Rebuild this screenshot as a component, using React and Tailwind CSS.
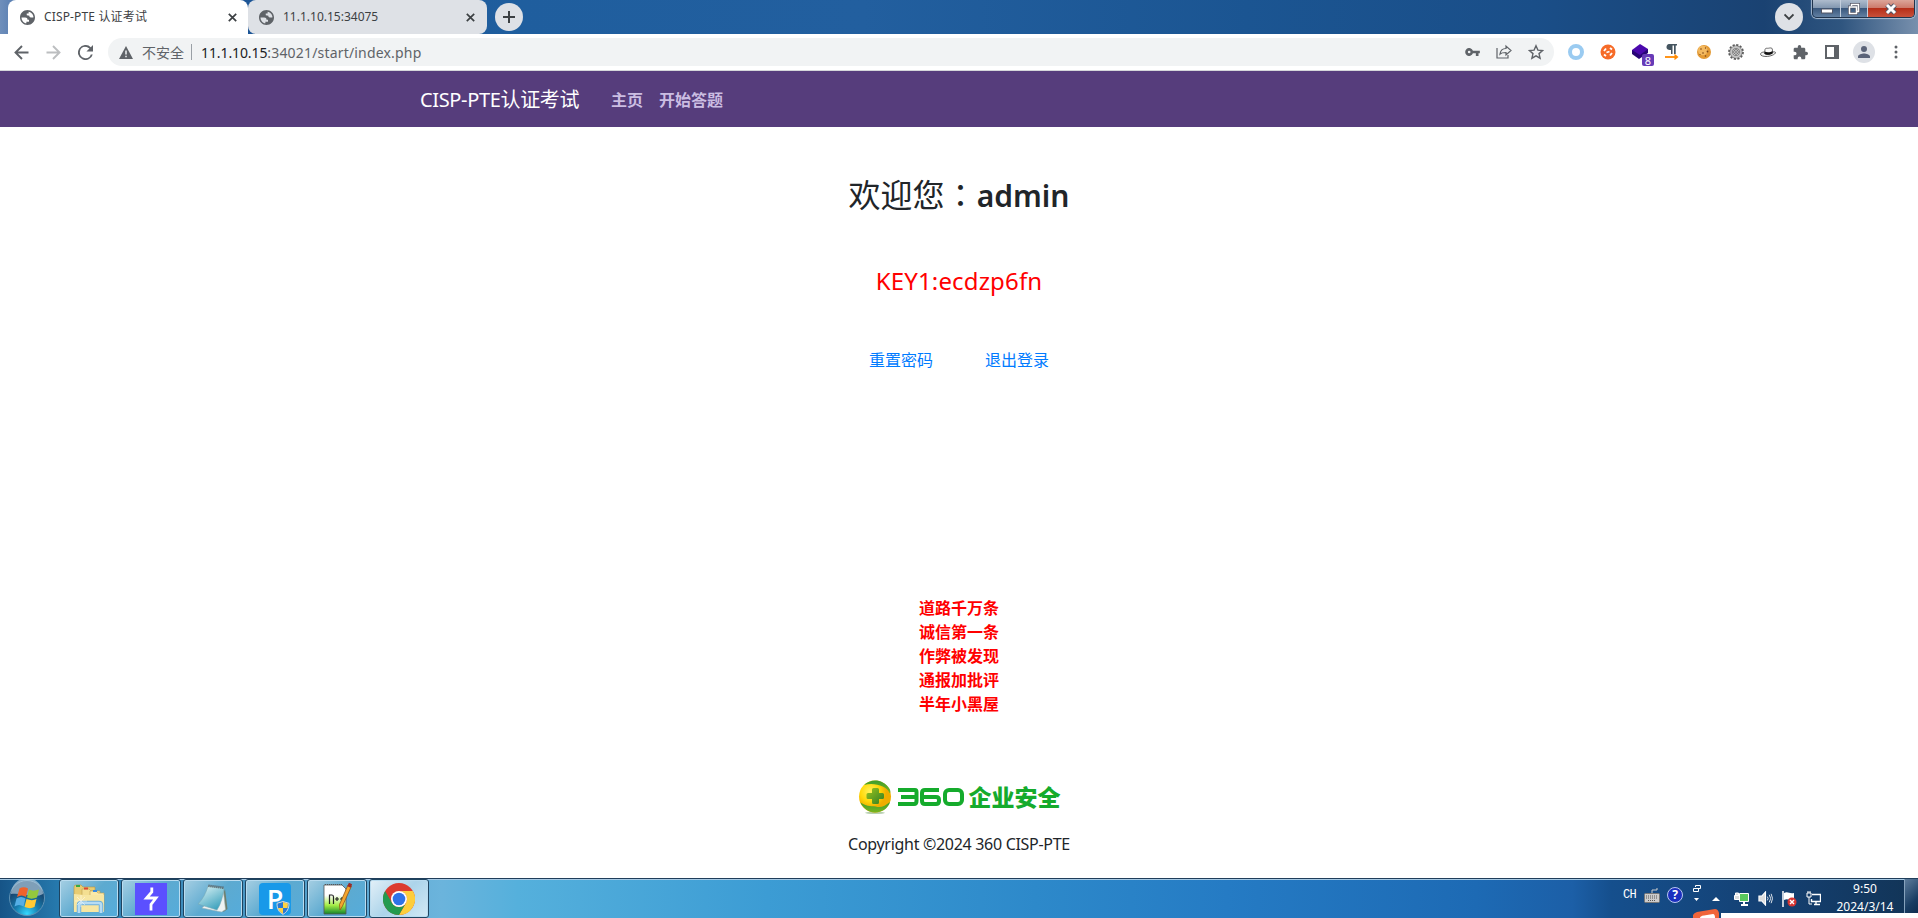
import React from "react";

const ui = "font-['Noto_Sans','Noto_Sans_CJK_SC',sans-serif]";

function Globe() {
  return (
    <svg className="size-[15px] shrink-0" viewBox="2 2 20 20" fill="#5f6368">
      <path d="M12 2C6.480 2 2 6.480 2 12s4.480 10 10 10 10-4.480 10-10S17.520 2 12 2zM4 12h5c2 0 3 1.200 3 3h2v2.500h-3.500v2.300C7 19.500 4 16 4 12zm9.500-7.800c3 .6 5.500 2.800 6.300 6V12h-3.300c-1.500 0-2-1-2-2.200L11 9V6.500h2.500z" fillRule="evenodd" />
    </svg>
  );
}

function Cross() {
  return (
    <svg className="size-[9px] shrink-0" viewBox="0 0 9 9" stroke="#3c4043" strokeWidth="1.700">
      <path d="M.8.8l7.400 7.400M8.200.8L.8 8.200" />
    </svg>
  );
}

function TabStrip() {
  return (
    <div className="flex h-[34px] shrink-0 bg-[linear-gradient(90deg,#6f8fbb_0,#5078ae_1%,#1c5495_12%,#1f5e9e_27%,#225f9f_45%,#1b5592_65%,#1a4e88_80%,#1a4272_92%,#2f557f_96%,#7890ad_100%)]">
      <div className="ml-2 flex h-full w-[240px] items-center rounded-t-lg bg-white pl-[12px] pr-[11px]">
        <Globe />
        <span className="ml-[9px] flex-1 whitespace-nowrap text-[12px] tracking-[0.150px] text-[#3c4043]">CISP-PTE 认证考试</span>
        <Cross />
      </div>
      <div className="flex h-full w-[239px] items-center rounded-lg bg-[#dee1e6] pl-[11px] pr-3">
        <Globe />
        <span className="ml-[9px] flex-1 text-[12px] text-[#3c4043]">11.1.10.15:34075</span>
        <Cross />
      </div>
      <div className="ml-2 mt-[3px] flex size-7 items-center justify-center rounded-full bg-[#dee1e6]">
        <svg className="size-3" viewBox="0 0 12 12" stroke="#3c4043" strokeWidth="2"><path d="M6 0v12M0 6h12" /></svg>
      </div>
      <div className="flex-1" />
      <div className="mt-[3px] flex size-7 items-center justify-center rounded-full bg-[#dee1e6]">
        <svg className="size-[10px]" viewBox="0 0 10 10" fill="none" stroke="#3c4043" strokeWidth="1.800"><path d="M.5 2.500L5 7l4.500-4.500" /></svg>
      </div>
      <div className="ml-[9px] mr-[3px] flex h-[18px] w-[103px] overflow-hidden rounded-b-[5px] border border-t-0 border-[#20344d] shadow-[0_0_1px_1px_#a9bdd3]">
        <div className="flex w-[28px] items-center justify-center border-r border-[#c4d0de] bg-[linear-gradient(#aebccd_0,#8398b1_45%,#3a587d_50%,#6280a2_100%)]">
          <svg className="size-[12px]" viewBox="0 0 12 12"><rect x=".5" y="6" width="11" height="4" fill="#fff" stroke="#535666" /></svg>
        </div>
        <div className="flex w-[27px] items-center justify-center border-r border-[#c4d0de] bg-[linear-gradient(#aebccd_0,#8398b1_45%,#3a587d_50%,#6280a2_100%)]">
          <svg className="size-[12px]" viewBox="0 0 12 12" fill="none"><path d="M3.500 3V1.500h7v7H9M1.500 4h7v6.500h-7z" stroke="#535666" strokeWidth="3" /><path d="M3.500 3V1.500h7v7H9M1.500 4h7v6.500h-7z" stroke="#fff" strokeWidth="1.500" /></svg>
        </div>
        <div className="flex flex-1 items-center justify-center bg-[linear-gradient(#dca599_0,#cd7b6c_45%,#b62f19_50%,#c8503a_100%)]">
          <svg className="h-[12px] w-[14px]" viewBox="-1 0 14 12"><path d="M2 2l8 8M10 2l-8 8" stroke="#535666" strokeWidth="5" /><path d="M2 2l8 8M10 2l-8 8" stroke="#fff" strokeWidth="3" /></svg>
        </div>
      </div>
    </div>
  );
}

function Slot({ children }) {
  return <div className="flex w-8 shrink-0 items-center justify-center">{children}</div>;
}

function Extensions() {
  return (
    <>
      <Slot><svg className="size-4" viewBox="0 0 16 16"><circle cx="8" cy="8" r="6" fill="none" stroke="#9acbf1" strokeWidth="4" /></svg></Slot>
      <Slot>
        <svg className="size-4" viewBox="0 0 16 16">
          <circle cx="8" cy="8" r="7.500" fill="#f66b28" />
          <path d="M4 7l2-2.500M10 4l2 1.500M12 9l-2 2.500M6 12l-2-1.500" stroke="#fff" strokeWidth="1.900" /><path d="M6.500 8.500l3-1" stroke="#fff" strokeWidth="1.800" />
        </svg>
      </Slot>
      <Slot>
        <div className="relative h-4 w-4">
          <svg className="size-4" viewBox="0 0 16 16"><path d="M0 6v4l7 5 9-6V5z" fill="#280576" /><path d="M0 6l8-6 8 5-8 6z" fill="#4b08ad" /></svg>
          <span className={"absolute left-[10px] top-[10px] flex h-3 w-3 items-center justify-center rounded-[2px] bg-[#673ab7] text-[11px] leading-none text-white " + ui}>8</span>
        </div>
      </Slot>
      <Slot>
        <svg className="size-4" viewBox="0 0 16 16"><path d="M5 0h8v1.500h-1.300V10H10V1.500H8.500V10H7V6C3 6 2.500 4.500 2.500 3S3.500 0 5 0z" fill="#455560" /><path d="M1 13h11" stroke="#ff8a00" strokeWidth="1.800" /><path d="M10.500 9.800L14.500 13l-4 3.200z" fill="#ff8a00" /></svg>
      </Slot>
      <Slot>
        <svg className="size-4" viewBox="0 0 16 16"><circle cx="8" cy="8" r="7" fill="#e39a35" /><circle cx="6.800" cy="6.500" r="4.800" fill="#f3b960" /><g fill="#7b4314"><circle cx="5" cy="5" r=".8" /><circle cx="9.500" cy="4" r=".7" /><circle cx="11.500" cy="7.500" r=".9" /><circle cx="7" cy="9" r=".8" /><circle cx="4" cy="10.500" r=".6" /><circle cx="9.500" cy="12" r=".8" /></g></svg>
      </Slot>
      <Slot>
        <svg className="size-4" viewBox="0 0 16 16" fill="none"><circle cx="8" cy="8" r="7" stroke="#5c5c5c" strokeWidth="1.800" strokeDasharray="2.200 1.465" /><circle cx="8" cy="8" r="4.800" stroke="#6a6a6a" strokeWidth="3.400" /><circle cx="8" cy="8" r="4.800" stroke="#c4c4c4" strokeWidth="2.200" /><circle cx="8" cy="8" r="2.300" fill="#eee" stroke="#555" strokeWidth="1" /><circle cx="8" cy="8" r="1" fill="#777" /></svg>
      </Slot>
      <Slot>
        <svg className="size-4" viewBox="0 0 16 16"><path d="M4.500 8C2 8 .5 9 .5 10.200c0 1.500 3 2.300 5.500 2.300 4 0 9.500-2 9.500-4 0-.7-1.500-.8-3-.5" fill="#f3f3f3" stroke="#444" strokeWidth=".8" /><path d="M4.500 9.500L5 5.500c.5-1.800 2-1 3.500-1.300S12 3.500 12.300 5l.4 4c-2 1.800-6.500 2-8.200.5z" fill="#fafafa" stroke="#333" strokeWidth=".7" /><path d="M4.700 7.500c2 1.300 6 1 7.800-.5l.2 2.200c-2 1.800-6.500 2-8.200.5z" fill="#111" /></svg>
      </Slot>
      <Slot><svg className="size-[15px]" viewBox="1 1 22 22" fill="#5f6368"><path d="M20.500 11H19V7c0-1.100-.9-2-2-2h-4V3.500a2.500 2.500 0 0 0-5 0V5H4c-1.100 0-2 .9-2 2v3.800h1.500a2.700 2.700 0 0 1 0 5.400H2V20c0 1.100.9 2 2 2h3.800v-1.500a2.700 2.700 0 0 1 5.400 0V22H17c1.100 0 2-.9 2-2v-4h1.500a2.500 2.500 0 0 0 0-5z" /></svg></Slot>
      <Slot><svg className="size-[14px]" viewBox="0 0 14 14"><path d="M1 1h12v12H1z" fill="none" stroke="#5f6368" strokeWidth="2" /><path d="M9 1h4v12H9z" fill="#5f6368" /></svg></Slot>
      <Slot>
        <div className="flex size-[22px] items-center justify-center rounded-full bg-[#dee1e6]"><svg className="size-[12px]" viewBox="4 4 16 16" fill="#5a6378"><path d="M12 12a4 4 0 1 0 0-8 4 4 0 0 0 0 8zm0 2c-2.700 0-8 1.300-8 4v2h16v-2c0-2.700-5.300-4-8-4z" /></svg></div>
      </Slot>
      <Slot><svg className="h-[14px] w-1" viewBox="0 0 4 14" fill="#5f6368"><circle cx="2" cy="2" r="1.500" /><circle cx="2" cy="7" r="1.500" /><circle cx="2" cy="12" r="1.500" /></svg></Slot>
    </>
  );
}

function Toolbar() {
  return (
    <div className="flex h-[36px] shrink-0 items-center bg-white pl-[14px] pr-[6px] text-[#5f6368]">
      <svg className="size-[15px]" viewBox="0 0 15 15" fill="none" stroke="#5f6368" strokeWidth="1.900"><path d="M14.500 7.500H1.500M8 1L1.500 7.500 8 14" /></svg>
      <svg className="ml-[17px] size-[15px]" viewBox="0 0 15 15" fill="none" stroke="#bcbec0" strokeWidth="1.900"><path d="M.5 7.500h13M7 1l6.500 6.500L7 14" /></svg>
      <svg className="ml-[17px] size-[15px]" viewBox="4 4 16 16" fill="#5f6368"><path d="M17.650 6.350A8 8 0 1 0 19.730 14h-2.080A6 6 0 1 1 12 6c1.660 0 3.140.69 4.220 1.780L13 11h7V4z" /></svg>
      <div className="ml-[15px] flex h-[28px] flex-1 items-center rounded-full bg-[#f1f3f4] pl-[11px] pr-[2px]">
        <svg className="h-[13px] w-[14px]" viewBox="0 0 14 13"><path d="M7 0l7 13H0z" fill="#5f6368" /><path d="M7 4.500v4M7 9.700v1.500" stroke="#f1f3f4" strokeWidth="1.500" /></svg>
        <span className="ml-[9px] text-[14px]">不安全</span>
        <span className="ml-[7px] h-4 w-px bg-[#9aa0a6]" />
        <span className="ml-[9px] flex-1 text-[14px] tracking-[0.180px] text-[#5f6368]"><span className="tracking-[-0.100px] text-[#202124]">11.1.10.15</span>:34021/start/index.php</span>
        <Slot><svg className="h-[8px] w-[15px]" viewBox="1 6 22 12" fill="#5f6368"><path d="M12.650 10A6 6 0 1 0 12.650 14H17v4h4v-4h2v-4zM7 14a2 2 0 1 1 0-4 2 2 0 0 1 0 4z" /></svg></Slot>
        <Slot><svg className="size-4" viewBox="0 0 16 16" fill="none" stroke="#5f6368" strokeWidth="1.200"><path d="M1 4v10h11v-3" /><path d="M4 10c.5-4 3-5.500 6-5.500V2l5 4.500-5 4.500V8.500c-2.500 0-4.500 0-6 1.500z" /></svg></Slot>
        <Slot><svg className="size-4" viewBox="0 0 16 16" fill="none" stroke="#5f6368" strokeWidth="1.400"><path d="M8 1.800l1.900 4.300 4.700.4L11 9.600l1.100 4.600L8 11.800l-4.100 2.400L5 9.600 1.400 6.500l4.700-.4z" /></svg></Slot>
      </div>
      <div className="ml-[6px] flex items-center"><Extensions /></div>
    </div>
  );
}

function Logo() {
  return (
    <div className="flex h-[36px] items-center">
      <svg className="size-[34px] shrink-0" viewBox="0 0 34 34">
        <defs>
          <radialGradient id="ball" cx="35%" cy="35%"><stop offset="0" stopColor="#fff45c" /><stop offset=".6" stopColor="#ffd90a" /><stop offset="1" stopColor="#efad00" /></radialGradient>
          <linearGradient id="leaf" x2="0" y2="1"><stop offset="0" stopColor="#3d9d2e" /><stop offset="1" stopColor="#7ab51d" /></linearGradient>
          <linearGradient id="plus" x2="1" y2="1"><stop offset="0" stopColor="#9dc51c" /><stop offset="1" stopColor="#2f7d24" /></linearGradient>
        </defs>
        <ellipse cx="17" cy="32.800" rx="10" ry="1.200" fill="#b7cfb0" />
        <circle cx="17" cy="16.500" r="16" fill="url(#ball)" />
        <path d="M6 5C13-2 25-1 31 8c2 3 1.500 5 .5 5C29 6 16 2 6 5z" fill="url(#leaf)" />
        <path d="M2.500 22.500c7 5 12 3 17 4.500 5 .5 8-1.500 12.500-5C30 29 23 32.500 17 32.500c-6 0-12-4-14.500-10z" fill="url(#leaf)" />
        <path d="M14 9.500q0-1.500 1.500-1.500h4q1.500 0 1.500 1.500V13h3.500q1.500 0 1.500 1.500v3q0 1.500-1.500 1.500H21v3.500q0 1.500-1.500 1.500h-4q-1.500 0-1.500-1.500V19h-4q-1.500 0-1.500-1.500v-3q0-1.500 1.500-1.500h4z" fill="url(#plus)" />
      </svg>
      <svg className="ml-[5px] h-[18px] w-[67px] shrink-0" viewBox="0 0 67 18" fill="none" stroke="#15ab2c" strokeWidth="4">
        <path d="M1 2h17q1.500 0 1.500 2v9q0 3-2.500 3H1M4 9h15" />
        <path d="M42 2H28q-3 0-3 3v8q0 3 3 3h11q3 0 3-3v-1q0-3-3-3H25" />
        <rect x="48" y="2" width="17" height="14" rx="4" />
      </svg>
      <span className="ml-[5px] whitespace-nowrap text-[23px] font-black leading-none text-[#15ab2c]">企业安全</span>
    </div>
  );
}

function Task({ children, active }) {
  return (
    <div className={"flex h-[39px] w-[60px] shrink-0 items-center justify-center rounded-[3px] border border-[#1e4460] shadow-[inset_0_0_0_1px_#b9dcf0] " + (active ? "bg-[linear-gradient(135deg,#e3f0f8,#acd4ea_50%,#d2e9f5)]" : "bg-[linear-gradient(135deg,#a6cfe3,#5daad0_50%,#55acdb)]")}>
      {children}
    </div>
  );
}

function Taskbar() {
  return (
    <footer className="relative flex h-[40px] shrink-0 overflow-hidden border-t border-[#203e5b] bg-[linear-gradient(90deg,#165487_0,#2679ad_3%,#6bb4dc_23%,#55b0dc_27%,#3c9cd4_40%,#2d89ca_54%,#257bc4_64%,#1d6ab4_77%,#1c5fa7_82%,#154f8d_84%,#143f70_93%,#123456_100%)] shadow-[inset_0_1px_0_#a5c9e4]">
      <svg className="ml-2 size-[38px] shrink-0" viewBox="0 0 38 38">
        <defs><radialGradient id="orb" cx="50%" cy="95%" r="70%"><stop offset="0" stopColor="#35d9ff" /><stop offset=".5" stopColor="#167bad" /><stop offset="1" stopColor="#164671" /></radialGradient></defs>
        <circle cx="19" cy="19" r="17.500" fill="url(#orb)" stroke="#5f92b5" />
        <path d="M3 15a16 16 0 0 1 32 0C27 20 12 13 3 15z" fill="#c7dbe8" opacity=".6" />
        <path d="M11.500 9.500c3-2 6-1.500 8.500 0l-2 8.500c-3-2-6-2-9 0z" fill="#ef632b" /><path d="M21 10.500c3 1.500 6 1.500 10 0l-2 8c-4 1.500-7 1.500-10 0z" fill="#94c83d" /><path d="M8.500 19.500c3-2 6-2 9 0l-2 8c-3-2-6-2-9 0z" fill="#55aee5" /><path d="M18.500 20c4 1.500 7 1.500 10 0l-2 8c-3 1.500-6 1.500-10 0z" fill="#ffca35" />
      </svg>
      <div className="ml-[13px] flex gap-[2px]">
        <Task>
          <svg className="h-[30px] w-[34px]" viewBox="0 0 34 30"><path d="M2 3q0-2 2-2h5l2 2h12v23H2z" fill="#e7cc72" stroke="#b79643" strokeWidth=".6" /><path d="M10 5h7l2 2h9v20H10z" fill="#f4df92" stroke="#bca050" strokeWidth=".6" /><path d="M18 7h6l2 2h6v18H18z" fill="#fae9a9" stroke="#bca050" strokeWidth=".6" /><path d="M4 2h4" stroke="#35aa45" strokeWidth="2" /><path d="M12 4.500h4" stroke="#dd4433" strokeWidth="2" /><path d="M21 7h4" stroke="#398ae0" strokeWidth="2" /><path d="M2 10l10 1h20v17H2z" fill="#f7e6a2" /><path d="M7 29V21q0-2 2-2h18q2 0 2 2v8" fill="none" stroke="#6fb1dc" strokeWidth="4.500" /><path d="M7 29V21q0-2 2-2h18q2 0 2 2v8" fill="none" stroke="#b7dcf3" strokeWidth="2.500" /><path d="M9 11v12M3 17h12M5 13l8 8M13 13l-8 8" stroke="#fff" strokeWidth=".7" opacity=".7" /></svg>
        </Task>
        <Task><svg className="size-8" viewBox="0 0 32 32"><path d="M0 0h32v32H0z" fill="#5b50ff" /><path d="M16.800 4.500v4.500l-5.300 6h9.500l-5 6.500v6" fill="none" stroke="#fff" strokeWidth="2.800" /></svg></Task>
        <Task>
          <svg className="h-[32px] w-[34px]" viewBox="0 0 34 32"><defs><linearGradient id="note" x2=".6" y2="1"><stop stopColor="#e4f7f8" /><stop offset="1" stopColor="#41a4bf" /></linearGradient></defs><path d="M29 6l2.500 20-4 3-3-10z" fill="#6e7f6d" /><path d="M27 5l2.500 21.500-4 2.500L6 25z" fill="#eef3f3" stroke="#9fb3b5" strokeWidth=".6" /><path d="M12 3l16 2c-1 8-3 16-7 22L2 21c5-5 8-11 10-18z" fill="url(#note)" stroke="#76a8b5" strokeWidth=".6" /><path d="M12.500 2.800l15.500 2" stroke="#555" strokeWidth="2.600" strokeDasharray="1 1" /></svg>
        </Task>
        <Task>
          <div className="relative flex size-8 items-center justify-center rounded-[4px] bg-[#1899e9] leading-none text-white">
            <span className="font-['Open_Sans','Noto_Sans',sans-serif] text-[27px] font-semibold">P</span>
            <svg className="absolute bottom-0 right-[1px] size-[14px]" viewBox="0 0 14 14"><path d="M7 0l6 2c0 6-2 9-6 12C3 11 1 8 1 2z" fill="#2a78d3" /><path d="M7 1l5 1.500L11.500 7H7zM2 7h5v6C4 11 2.500 9.500 2 7z" fill="#ffd242" /><path d="M7 .5l6 1.800c0 5-2 9-6 11C3 11.500 1 8 1 2.300z" fill="none" stroke="#ddd" /></svg>
          </div>
        </Task>
        <Task>
          <svg className="h-[34px] w-[32px]" viewBox="0 0 32 34"><defs><linearGradient id="page" x2="0" y2="1"><stop offset=".35" stopColor="#fff" /><stop offset=".7" stopColor="#a4ed45" /><stop offset="1" stopColor="#12842b" /></linearGradient></defs><path d="M3 3h18l4 4v25H3z" fill="url(#page)" stroke="#555" strokeWidth=".8" /><path d="M4 2.500h17" stroke="#555" strokeDasharray="1 1" /><path d="M8.500 22v-9H11q1.500 0 1.500 2v7M14 17h4M16 15v4M19 17h4M21 15v4" fill="none" stroke="#222" strokeWidth="1.200" /><path d="M30.500 4L21.500 24l-2.500 4-.5-5.500L27 3z" fill="#f5a52e" stroke="#8f5519" strokeWidth=".8" /><path d="M29.500 1.500L28 5" stroke="#9a2b2b" strokeWidth="3.500" /></svg>
        </Task>
        <Task active>
          <svg className="size-8" viewBox="0 0 32 32"><circle cx="16" cy="16" r="16" fill="#dc3b2f" /><path d="M16 8h13.860A16 16 0 0 1 16 32l6.930-12A8 8 0 0 0 16 8z" fill="#fdcd3b" /><path d="M2.140 8A16 16 0 0 0 16 32l6.930-12A8 8 0 0 1 9.070 20z" fill="#249a4f" /><circle cx="16" cy="16" r="8" fill="#fff" /><circle cx="16" cy="16" r="6.300" fill="#2f72e8" /></svg>
        </Task>
      </div>
      <div className="flex-1" />
      <div className="flex h-[34px] items-center text-white">
        <span className="mb-[2px] w-[14px] font-['Liberation_Mono',monospace] text-[12px] tracking-[-0.800px]">CH</span>
        <svg className="mb-[2px] ml-[7px] h-[15px] w-4" viewBox="0 0 16 15"><path d="M8 5V2h5V0" fill="none" stroke="#ccc" /><rect x=".5" y="5.500" width="15" height="9" rx="1" fill="#ccc" stroke="#777" /><path d="M2 8h12M2 10h12M4 12.500h8" stroke="#555" strokeDasharray="1 1" /></svg>
        <div className="mb-[2px] ml-[7px] flex size-[16px] items-center justify-center rounded-full border border-[#b9c6f1] bg-[#1c2fbf] text-[12px] font-bold leading-none">?</div>
        <svg className="mb-[7px] ml-[9px] h-[18px] w-[9px]" viewBox="0 0 9 18" fill="none" stroke="#fff"><path d="M3.500 3V1.500h5v3H6M1.500 4.500h5v3h-5z" /><path d="M2 14h5L4.500 17z" fill="#fff" stroke="none" /></svg>
        <svg className="ml-[11px] mt-[6px] h-1 w-2" viewBox="0 0 8 4" fill="#fff"><path d="M4 0l4 4H0z" /></svg>
        <svg className="ml-[14px] mt-[5px] h-[14px] w-[15px]" viewBox="0 0 15 14" fill="none" stroke="#fff"><path d="M5.500 1.500h9v8h-9z" fill="#59c85d" /><path d="M10 10v3M7 13h7" strokeWidth="2" /><path d="M.5 3.500h5v4h-5zM1.500 3V1h3v2" fill="#ddd" /></svg>
        <svg className="ml-[9px] mt-[5px] size-[15px]" viewBox="0 0 16 16" fill="none" stroke="#fff" strokeWidth="1.200"><path d="M1 5.500h3L8 1v14l-4-4.500H1z" fill="#ddd" /><path d="M10 6q1.500 2 0 4M12 4q3 4 0 8M14 3q3 5 0 10" strokeWidth=".9" /></svg>
        <svg className="ml-[9px] mt-[5px] h-4 w-[15px]" viewBox="0 0 15 16"><path d="M1 0v16" stroke="#fff" strokeWidth="1.500" /><path d="M2 2c4-2 5 1 10 0v7c-4 1-6-2-10 0z" fill="#fff" /><circle cx="10" cy="11" r="4.500" fill="#d73532" /><path d="M8 9l4 4M12 9l-4 4" stroke="#fff" strokeWidth="1.400" /></svg>
        <svg className="ml-[9px] mt-[5px] size-[15px]" viewBox="0 0 15 15" fill="none" stroke="#fff"><path d="M6 3.500h8.500v7H5.500V8M8 13.500h6M10 11v2" strokeWidth="1.400" /><path d="M1 2h4v4H1zM2 0v2M4 0v2M3 6v7h3" /></svg>
      </div>
      <div className="ml-[9px] w-[70px] pt-[1px] text-center text-[12px] leading-[18px] text-white">
        <div>9:50</div><div>2024/3/14</div>
      </div>
      <div className="ml-[4px] w-[14px] border-l border-[#87a3bd] bg-[linear-gradient(135deg,#5d7c9c,#183c62_60%,#0c2849)]" />
      <div className="absolute bottom-0 right-0 flex h-[5px] w-[225px]">
        <svg className="-mt-[4px] h-[9px] w-[28px] shrink-0" viewBox="0 0 28 9"><path d="M0 6q1-2 4-3L22 0q3 0 4 4v5H0z" fill="#f0643a" /><path d="M7 9q0-2 4-2.500L20 5q2 0 2 4z" fill="#fff" /></svg>
        <div className="flex-1 bg-white" />
      </div>
    </footer>
  );
}

export default function App() {
  return (
    <div className={"flex h-[918px] w-full flex-col overflow-hidden bg-white " + ui}>
      <TabStrip />
      <Toolbar />
      <nav className="flex h-[57px] shrink-0 items-center border-t border-[#d5d7da] bg-[#563d7c] pl-[420px] pt-[2px] text-white">
        <span className="text-[20px] tracking-[-0.350px]">CISP-PTE认证考试</span>
        <span className="ml-8 text-[16px] font-bold text-[#cbbde2]">主页</span>
        <span className="ml-4 text-[16px] font-bold text-[#cbbde2]">开始答题</span>
      </nav>
      <main className="flex flex-1 flex-col items-center">
        <h1 className="mt-[45px] h-[44px] text-[32px] leading-[42px] text-[#212529]">欢迎您<span className="font-['Noto_Sans_CJK_TC',sans-serif]" lang="zh-TW">：</span><span className="text-[30px] font-semibold">admin</span></h1>
        <p className="mt-[47px] text-[24px] leading-9 tracking-[0.150px] text-[#ff0000]">KEY1:ecdzp6fn</p>
        <div className="mt-[49px] flex gap-[52px] text-[16px] leading-6 text-[#007bff]"><a>重置密码</a><a>退出登录</a></div>
        <div className="mt-[224px] text-[16px] font-bold leading-6 text-[#ff0000]">
          {["道路千万条", "诚信第一条", "作弊被发现", "通报加批评", "半年小黑屋"].map((t) => <div key={t}>{t}</div>)}
        </div>
        <div className="mt-[63px]"><Logo /></div>
        <p className="mt-[17px] text-[16px] leading-6 tracking-[-0.300px] text-[#212529]">Copyright ©2024 360 CISP-PTE</p>
      </main>
      <Taskbar />
    </div>
  );
}
